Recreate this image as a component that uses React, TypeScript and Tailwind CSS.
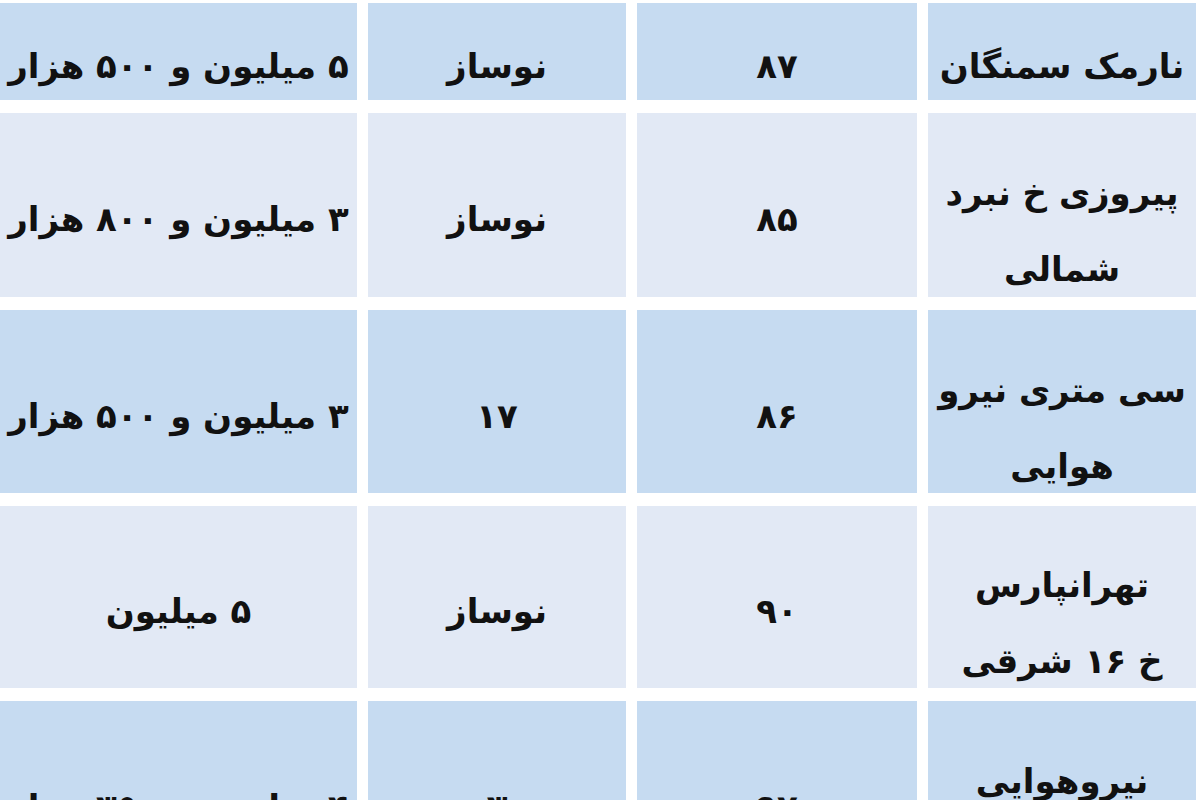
import React from 'react';

type Row = {
  name: string[];
  area: string;
  age: string;
  price: string;
  blue: boolean;
  h: string;
};

const rows: Row[] = [
  { name: ['نارمک سمنگان'], area: '۸۷', age: 'نوساز', price: '۵ میلیون و ۵۰۰ هزار', blue: true, h: 'h-[97px]' },
  { name: ['پیروزی خ نبرد', 'شمالی'], area: '۸۵', age: 'نوساز', price: '۳ میلیون و ۸۰۰ هزار', blue: false, h: 'h-[184px]' },
  { name: ['سی متری نیرو', 'هوایی'], area: '۸۶', age: '۱۷', price: '۳ میلیون و ۵۰۰ هزار', blue: true, h: 'h-[183px]' },
  { name: ['تهرانپارس', 'خ ۱۶ شرقی'], area: '۹۰', age: 'نوساز', price: '۵ میلیون', blue: false, h: 'h-[182px]' },
  { name: ['نیروهوایی', 'شرقی'], area: '۹۷', age: '۳', price: '۴ میلیون و ۳۵۰ هزار', blue: true, h: 'h-[184px]' },
];

// text in the picture sits a little under the middle of each cell
const Cell: React.FC<{ w: string; blue: boolean; two?: boolean; children: React.ReactNode }> = ({
  w,
  blue,
  two,
  children,
}) => (
  <div
    className={`${w} shrink-0 flex flex-col items-center justify-center text-center ${
      two ? 'pt-[52px] leading-[76px]' : 'pt-[28px] leading-[40px]'
    } ${blue ? 'bg-[#c6dbf1]' : 'bg-[#e2e9f5]'}`}
  >
    {children}
  </div>
);

export default function App() {
  return (
    <div
      dir="rtl"
      className="w-[1200px] h-[800px] overflow-hidden bg-white pt-[3px] pr-[4px] flex flex-col gap-[13px] text-[#111] font-bold text-[34px]"
      style={{ fontFamily: '"DejaVu Sans", "Noto Sans", sans-serif' }}
    >
      {rows.map((r, i) => (
        <div key={i} className={`${r.h} shrink-0 flex gap-[11px]`}>
          <Cell w="w-[268px]" blue={r.blue} two={r.name.length > 1}>
            {r.name.map((line, j) => (
              <span key={j}>{line}</span>
            ))}
          </Cell>
          <Cell w="w-[280px]" blue={r.blue}>
            <span>{r.area}</span>
          </Cell>
          <Cell w="w-[258px]" blue={r.blue}>
            <span>{r.age}</span>
          </Cell>
          <Cell w="w-[357px]" blue={r.blue}>
            <span>{r.price}</span>
          </Cell>
        </div>
      ))}
    </div>
  );
}
